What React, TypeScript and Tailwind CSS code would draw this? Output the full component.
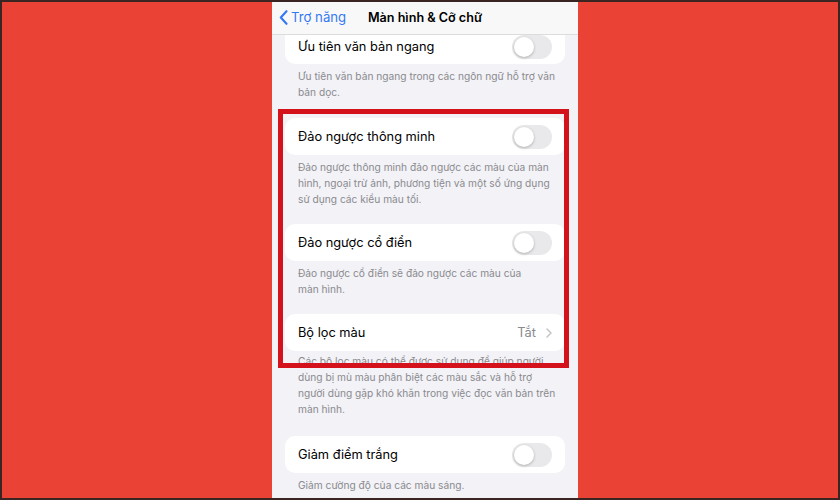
import React from 'react'

const font = { fontFamily: 'Inter, "Noto Sans", sans-serif' }

function Toggle() {
  return (
    <div className="relative w-[40px] h-[24px] rounded-full bg-[#e9e9eb] flex-shrink-0">
      <div className="absolute left-[2px] top-[2px] w-[20px] h-[20px] rounded-full bg-white shadow-[0_1px_3px_rgba(0,0,0,0.25)]" />
    </div>
  )
}

function Footer({ lines, className = 'pt-[4px] pb-[17px]' }: { lines: string[]; className?: string }) {
  return (
    <div className={`px-[26px] text-[10.2px] leading-[16px] text-[#8a8a8e] ${className}`}>
      {lines.map((l, i) => (
        <div key={i} className="whitespace-nowrap">{l}</div>
      ))}
    </div>
  )
}

function ToggleCard({ label }: { label: string }) {
  return (
    <div className="mx-[13px] rounded-[10px] bg-white h-[37px] flex items-center justify-between px-[13px]">
      <span className="text-[12.8px] text-black">{label}</span>
      <Toggle />
    </div>
  )
}

export default function App() {
  return (
    <div
      className="w-[840px] h-[500px] bg-[#ea4335] border-2 border-[#3a2522] flex pl-[270px] overflow-hidden"
      style={font}
    >
      {/* block flow so the fixed-height rows never shrink */}
      <div className="relative w-[306px] h-full bg-[#f2f2f7] overflow-hidden">
        {/* nav */}
        <div className="h-[33px] bg-[#f8f8f8] border-b border-[#dcdcdc] grid grid-cols-[1fr_auto_1fr] items-center">
          <div className="flex items-center gap-[3px] pl-[7px] text-[#3478f6]">
            <svg width="9" height="15" viewBox="0 0 9 15" fill="none">
              <path d="M7.5 1.2 L1.8 7.5 L7.5 13.8" stroke="#3478f6" strokeWidth="2.1" strokeLinecap="round" strokeLinejoin="round" />
            </svg>
            <span className="text-[13.2px]">Trợ năng</span>
          </div>
          <span className="text-[12.6px] font-semibold text-black whitespace-nowrap">Màn hình &amp; Cỡ chữ</span>
          <div />
        </div>

        {/* scrolled content */}
        <div className="mx-[13px] rounded-b-[10px] bg-white h-[29px] pb-[5px] flex items-center justify-between px-[13px]">
          <span className="text-[12.8px] text-black">Ưu tiên văn bản ngang</span>
          <Toggle />
        </div>
        <Footer
          className="pt-[4px] pb-[18px]"
          lines={['Ưu tiên văn bản ngang trong các ngôn ngữ hỗ trợ văn', 'bản dọc.']}
        />

        <ToggleCard label="Đảo ngược thông minh" />
        <Footer
          lines={[
            'Đảo ngược thông minh đảo ngược các màu của màn',
            'hình, ngoại trừ ảnh, phương tiện và một số ứng dụng',
            'sử dụng các kiểu màu tối.',
          ]}
        />

        <ToggleCard label="Đảo ngược cổ điển" />
        <Footer lines={['Đảo ngược cổ điển sẽ đảo ngược các màu của', 'màn hình.']} />

        <div className="mx-[13px] rounded-[10px] bg-white h-[37px] flex items-center justify-between pl-[13px] pr-[13px]">
          <span className="text-[12.8px] text-black">Bộ lọc màu</span>
          <div className="flex items-center gap-[10px]">
            <span className="text-[12.8px] text-[#8a8a8e]">Tắt</span>
            <svg width="6" height="10" viewBox="0 0 6 10" fill="none">
              <path d="M1 1 L5 5 L1 9" stroke="#c4c4c7" strokeWidth="1.5" strokeLinecap="round" strokeLinejoin="round" />
            </svg>
          </div>
        </div>
        <Footer
          className="pt-[2px] pb-[19px]"
          lines={[
            'Các bộ lọc màu có thể được sử dụng để giúp người',
            'dùng bị mù màu phân biệt các màu sắc và hỗ trợ',
            'người dùng gặp khó khăn trong việc đọc văn bản trên',
            'màn hình.',
          ]}
        />

        <ToggleCard label="Giảm điểm trắng" />
        <Footer lines={['Giảm cường độ của các màu sáng.']} />

        {/* highlight frame */}
        <div className="absolute left-[6px] top-[107px] w-[291px] h-[259px] border-[5px] border-[#d3121c]" />
      </div>
    </div>
  )
}
